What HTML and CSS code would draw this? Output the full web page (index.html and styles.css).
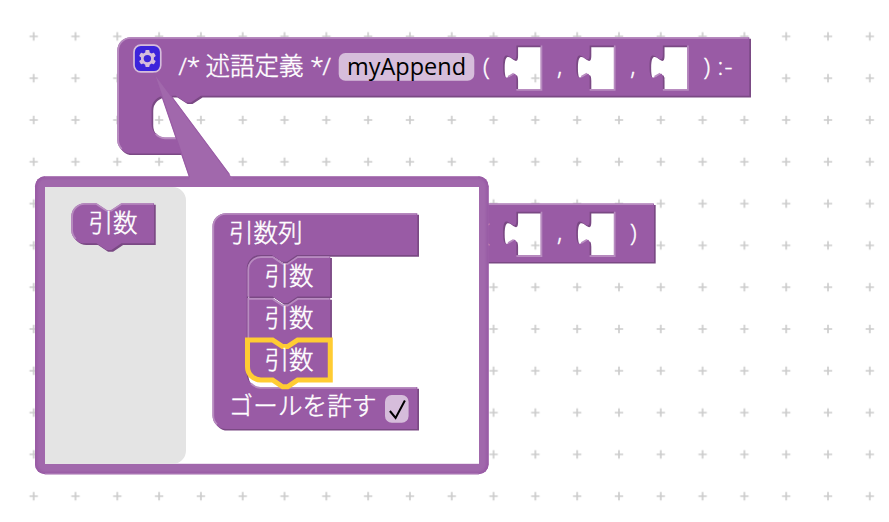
FILE: index.html
```
<!DOCTYPE html>
<html lang="ja">
<head>
<meta charset="utf-8">
<title>Blocks</title>
<link rel="stylesheet" href="styles.css">
</head>
<body>
<svg class="workspace" viewBox="0 0 889 522" width="889" height="522">
  <defs>
    <pattern id="grid" x="12.8" y="15.5" width="41.806" height="41.8" patternUnits="userSpaceOnUse">
      <path class="cross" d="M16.7 20.9h8.4M20.9 16.7v8.4"/>
    </pattern>
    <filter id="soften" x="-5%" y="-5%" width="110%" height="110%">
      <feGaussianBlur stdDeviation="1"/>
    </filter>
    <clipPath id="bubble-clip">
      <rect x="35" y="176.300" width="453.600" height="298" rx="10"/>
    </clipPath>
    <path id="define" fill-rule="evenodd" d="M0 8A8 8 0 0 1 8 0H378V35H50l-6 4h-3l-6-4h-6.500a8 8 0 0 0-8 8v9a8 8 0 0 0 8 8H46V69.500H8A8 8 0 0 1 0 61.500Z
      M238.700 5H253.200V31H238.700V25c0-10-8 8-8-7.500s8 2.500 8-7.500Z
      M282.500 5H297V31H282.500V25c0-10-8 8-8-7.500s8 2.500 8-7.500Z
      M326.300 5H340.800V31H326.300V25c0-10-8 8-8-7.500s8 2.500 8-7.500Z"/>
    <path id="call" fill-rule="evenodd" d="M0 0H321V35H0Z
      M238.700 5H253.200V31H238.700V25c0-10-8 8-8-7.500s8 2.500 8-7.500Z
      M282.500 5H297V31H282.500V25c0-10-8 8-8-7.500s8 2.500 8-7.500Z"/>
    <path id="arg" d="M0 8A8 8 0 0 1 8 0H15l6 4h3l6-4H49.500V24H30l-6 4h-3l-6-4H8A8 8 0 0 1 0 16Z"/>
    <path id="arg-first" d="M0 8A8 8 0 0 1 8 0H15l6 4h3l6-4H49.500V24H30l-6 4h-3l-6-4H0Z"/>
    <path id="arg-mid" d="M0 0H15l6 4h3l6-4H49.500V24H30l-6 4h-3l-6-4H0Z"/>
    <path id="arg-last" d="M0 0H15l6 4h3l6-4H49.500V24H30l-6 4h-3l-6-4H8A8 8 0 0 1 0 16Z"/>
    <path id="container" d="M0 8A8 8 0 0 1 8 0H122.500V25H50.500l-6 4h-3l-6-4h-7a8 8 0 0 0-8 8V96a8 8 0 0 0 8 8H122.500V129H8A8 8 0 0 1 0 121Z"/>
  </defs>

  <rect width="889" height="522" fill="url(#grid)"/>

  <!-- predicate definition -->
  <g transform="translate(117.300 37.200) scale(1.672)">
    <use href="#define" class="dark" x="1" y="1"/>
    <use href="#define" class="body"/>
    <path class="light" d="M.5 61.500V8A7.500 7.500 0 0 1 8 .5H377.500M2.700 66.800A7.500 7.500 0 0 1 .5 61.500M23 57.800A8.500 8.500 0 0 0 28.500 60.500H46
      M253.700 5V31.500H238.700M233.700 23.700l3.400-2M297.500 5V31.500H282.500M277.500 23.700l3.400-2M341.300 5V31.500H326.300M321.300 23.700l3.400-2"/>
  </g>
  <g transform="translate(134 45.200) scale(1.672)" class="gear">
    <rect class="gear-box" width="16" height="16" rx="4"/>
    <path class="gear-shape" d="m4.203,7.296 0,1.368 -0.92,0.677 -0.11,0.41 0.9,1.559 0.41,0.11 1.043,-0.457 1.187,0.683 0.127,1.134 0.3,0.3 1.8,0 0.3,-0.299 0.127,-1.138 1.185,-0.682 1.046,0.458 0.409,-0.11 0.9,-1.559 -0.11,-0.41 -0.92,-0.677 0,-1.366 0.92,-0.677 0.11,-0.41 -0.9,-1.559 -0.409,-0.109 -1.046,0.458 -1.185,-0.682 -0.127,-1.138 -0.3,-0.299 -1.8,0 -0.3,0.3 -0.126,1.135 -1.187,0.682 -1.043,-0.457 -0.41,0.11 -0.899,1.559 0.108,0.409z"/>
    <circle class="gear-hole" cx="8" cy="8" r="2.200"/>
  </g>
  <text class="label latin" x="178.500" y="75">/*</text>
  <text class="label" x="205.500" y="75" textLength="98">述語定義</text>
  <text class="label latin" x="310.300" y="75" textLength="20.500">*/</text>
  <rect class="field" x="338.700" y="53" width="135.600" height="27.700" rx="6.700"/>
  <text class="value" x="347" y="75" textLength="119" lengthAdjust="spacingAndGlyphs">myAppend</text>
  <text class="label latin" x="483" y="75">(</text>
  <text class="label latin" x="557" y="75">,</text>
  <text class="label latin" x="630.300" y="75">,</text>
  <text class="label latin" x="703.500" y="75">)</text>
  <text class="label latin" x="717.500" y="75" textLength="15">:-</text>

  <!-- predicate call, partly behind the bubble -->
  <g transform="translate(117.300 203.400) scale(1.672)">
    <use href="#call" class="dark" x="1" y="1"/>
    <use href="#call" class="body"/>
    <path class="light" d="M0 .5H320.500M253.700 5V31.500H238.700M233.700 23.700l3.400-2M297.500 5V31.500H282.500M277.500 23.700l3.400-2"/>
  </g>
  <text class="label latin" x="483" y="241">(</text>
  <text class="label latin" x="557" y="241">,</text>
  <text class="label latin" x="630" y="241">)</text>

  <!-- mutator bubble -->
  <rect class="bubble" x="35" y="176.300" width="453.600" height="298" rx="10"/>
  <g clip-path="url(#bubble-clip)">
    <rect class="bubble-shade" x="35" y="176.300" width="453.600" height="298" rx="10" filter="url(#soften)"/>
    <path class="bubble-rim" d="M45 176.600H478.600M45 474H478.600"/>
  </g>
  <path class="bubble" d="M153.500 72L189.500 178V184H233V178.500Q230.500 176.500 229 173.500Z"/>
  <path class="tail-edge" d="M154 73L189.500 177M154 73L229.500 174.500"/>
  <rect class="canvas" x="45" y="187" width="434" height="276.800"/>
  <path class="flyout" d="M45 187H172.600a13.400 13.400 0 0 1 13.400 13.400V450.400a13.400 13.400 0 0 1-13.400 13.400H45Z"/>

  <g transform="translate(71.300 203.200) scale(1.672)">
    <use href="#arg" class="dark" x="1" y="1"/>
    <use href="#arg" class="body"/>
    <path class="light" d="M2.700 21.300A7.500 7.500 0 0 1 .5 16V8A7.500 7.500 0 0 1 8 .5H15l6 4h3l6-4H49"/>
  </g>
  <text class="label" x="88.500" y="232" textLength="49">引数</text>

  <g transform="translate(212.500 213.200) scale(1.672)">
    <use href="#container" class="dark" x="1" y="1"/>
    <use href="#container" class="body"/>
    <path class="light" d="M2.700 126.300A7.500 7.500 0 0 1 .5 121V8A7.500 7.500 0 0 1 8 .5H122M23 101.800A8.500 8.500 0 0 0 28.500 104.500H122"/>
  </g>
  <g transform="translate(247.500 256.300) scale(1.672)">
    <use href="#arg-first" class="dark" x="1" y="1"/>
    <use href="#arg-first" class="body"/>
    <path class="light" d="M.5 24V8A7.500 7.500 0 0 1 8 .5H15l6 4h3l6-4H49"/>
    <use href="#arg-mid" class="dark" x="1" y="26"/>
    <use href="#arg-mid" class="body" y="25"/>
    <path class="light" d="M.5 49V25.500H15l6 4h3l6-4H49"/>
    <use href="#arg-last" class="body selected" y="50"/>
  </g>
  <text class="label" x="229" y="242" textLength="73.500">引数列</text>
  <text class="label" x="264.500" y="285" textLength="49">引数</text>
  <text class="label" x="264.500" y="327" textLength="49">引数</text>
  <text class="label" x="264.500" y="369" textLength="49">引数</text>
  <text class="label" x="228.500" y="415" textLength="148">ゴールを許す</text>
  <rect class="field" x="385" y="395" width="23.600" height="27.700" rx="6.700"/>
  <path class="check" d="M389.900 411L395.600 418L404.900 400.500"/>
</svg>
</body>
</html>
```
FILE: styles.css
```
body {
  margin: 0;
  background: #fff;
  overflow: hidden;
}

.workspace {
  display: block;
}

.cross {
  fill: none;
  stroke: #ccc;
  stroke-width: 1.67;
}

.body {
  fill: #995ba5;
}

.dark {
  fill: #7a4984;
}

.light {
  fill: none;
  stroke: #b88cc0;
  stroke-width: 1;
}

.selected {
  stroke: #fc3;
  stroke-width: 3;
}

.bubble {
  fill: #a168ac;
}

.bubble-shade {
  fill: none;
  stroke: #995ba5;
  stroke-width: 5;
}

.bubble-rim {
  fill: none;
  stroke: #b88cc0;
  stroke-width: 1;
}

.tail-edge {
  fill: none;
  stroke: #995ba5;
  stroke-width: 1.2;
}

.canvas {
  fill: #fff;
}

.flyout {
  fill: #e4e4e4;
}

.label,
.value {
  font-size: 24.5px;
  white-space: pre;
}

.label {
  fill: #fff;
  stroke: #fff;
  stroke-width: 0.45;
  font-family: "Noto Sans CJK JP", sans-serif;
  font-weight: 300;
}

.latin,
.value {
  font-family: "Open Sans", "Noto Sans", sans-serif;
}

.value {
  fill: #000;
}

.field {
  fill: #fff;
  fill-opacity: 0.6;
}

.gear {
  opacity: 0.6;
}

.gear-box {
  fill: #00f;
  stroke: #fff;
  stroke-width: 1;
}

.gear-shape {
  fill: #fff;
}

.gear-hole {
  fill: #00f;
}

.check {
  fill: none;
  stroke: #000;
  stroke-width: 2;
}
```
